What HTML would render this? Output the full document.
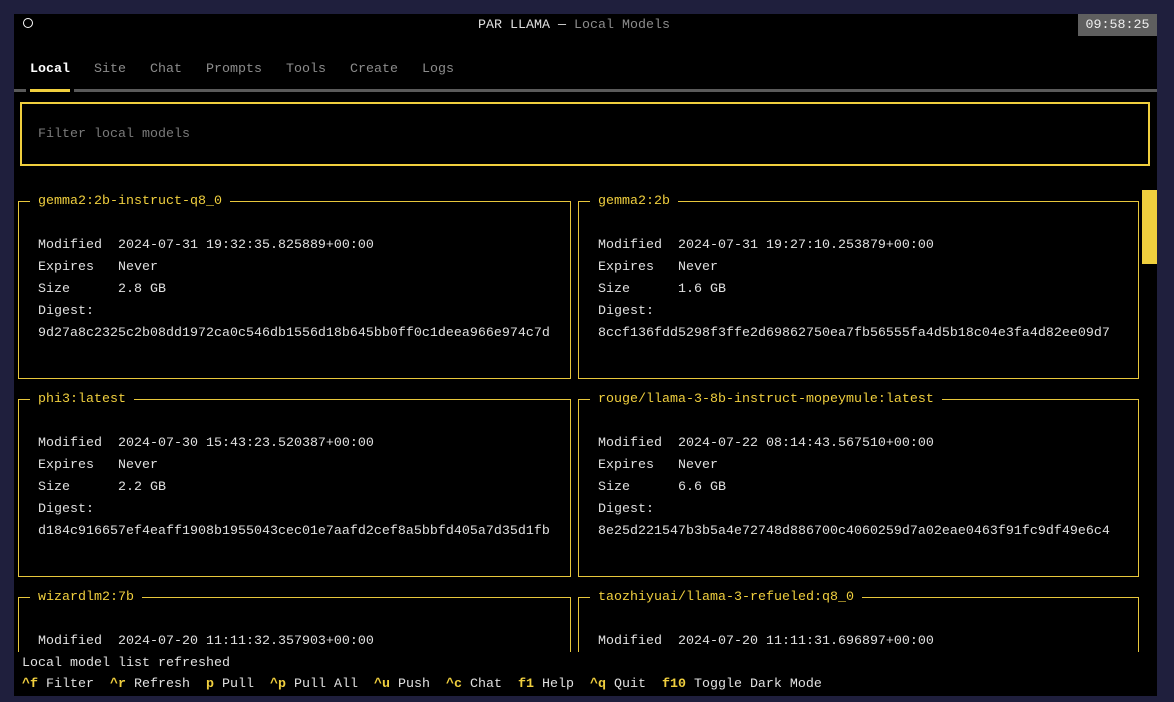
<!DOCTYPE html>
<html style="overflow:hidden;height:702px"><head><meta charset="utf-8"><style>
body{margin:0;width:1174px;height:702px;background:#1f1f3d;overflow:hidden;font-family:"Liberation Mono","DejaVu Sans Mono",monospace;font-size:13.33px;}
#scr{position:absolute;left:14px;top:14px;width:1143px;height:682px;background:#000;overflow:hidden;color:#e0e0e0}
.t{position:absolute;white-space:pre;line-height:22px;transform:translateY(1px)}
.g{color:#8c8c8c}.y{color:#f0cf3e}.b{font-weight:bold}
.card{position:absolute;border:1px solid #e8c73c;width:551px;height:176px}
.ttl{position:absolute;white-space:pre;line-height:22px;background:#000;color:#f0cf3e;transform:translateY(1px)}
#list{position:absolute;left:0;top:176px;width:1143px;height:462px;overflow:hidden}
</style></head><body><div id="scr">
<div style="position:absolute;left:9px;top:4px;width:8px;height:8px;border:1.5px solid #fff;border-radius:50%"></div>
<div class="t" style="left:464px;top:0">PAR LLAMA — <span class="g">Local Models</span></div>
<div class="t" style="left:1064px;top:0;width:79px;height:22px;background:#5f5f5f;text-align:center;color:#eee;transform:none;line-height:23px">09:58:25</div>

<div class="t b" style="left:16px;top:44px;color:#fff">Local</div>
<div class="t g" style="left:80px;top:44px">Site</div>
<div class="t g" style="left:136px;top:44px">Chat</div>
<div class="t g" style="left:192px;top:44px">Prompts</div>
<div class="t g" style="left:272px;top:44px">Tools</div>
<div class="t g" style="left:336px;top:44px">Create</div>
<div class="t g" style="left:408px;top:44px">Logs</div>
<div style="position:absolute;left:0;top:75px;width:12px;height:3px;background:#5a5a5a"></div>
<div style="position:absolute;left:16px;top:75px;width:40px;height:3px;background:#f0cf3e"></div>
<div style="position:absolute;left:60px;top:75px;width:1083px;height:3px;background:#5a5a5a"></div>

<div style="position:absolute;left:6px;top:88px;width:1126px;height:60px;border:2px solid #f0cf3e"></div>
<div class="t" style="left:24px;top:109px;color:#7a7a7a">Filter local models</div>

<div style="position:absolute;left:1128px;top:176px;width:15px;height:74px;background:#f0cf3e"></div>

<div id="list">
<div class="card" style="left:4px;top:11px"></div>
<div class="ttl" style="left:16px;top:0"> gemma2:2b-instruct-q8_0 </div>
<div class="t" style="left:24px;top:44px">Modified  2024-07-31 19:32:35.825889+00:00
Expires   Never
Size      2.8 GB
Digest:
9d27a8c2325c2b08dd1972ca0c546db1556d18b645bb0ff0c1deea966e974c7d</div>
<div class="card" style="left:564px;top:11px;width:559px"></div>
<div class="ttl" style="left:576px;top:0"> gemma2:2b </div>
<div class="t" style="left:584px;top:44px">Modified  2024-07-31 19:27:10.253879+00:00
Expires   Never
Size      1.6 GB
Digest:
8ccf136fdd5298f3ffe2d69862750ea7fb56555fa4d5b18c04e3fa4d82ee09d7</div>
<div class="card" style="left:4px;top:209px"></div>
<div class="ttl" style="left:16px;top:198px"> phi3:latest </div>
<div class="t" style="left:24px;top:242px">Modified  2024-07-30 15:43:23.520387+00:00
Expires   Never
Size      2.2 GB
Digest:
d184c916657ef4eaff1908b1955043cec01e7aafd2cef8a5bbfd405a7d35d1fb</div>
<div class="card" style="left:564px;top:209px;width:559px"></div>
<div class="ttl" style="left:576px;top:198px"> rouge/llama-3-8b-instruct-mopeymule:latest </div>
<div class="t" style="left:584px;top:242px">Modified  2024-07-22 08:14:43.567510+00:00
Expires   Never
Size      6.6 GB
Digest:
8e25d221547b3b5a4e72748d886700c4060259d7a02eae0463f91fc9df49e6c4</div>
<div class="card" style="left:4px;top:407px"></div>
<div class="ttl" style="left:16px;top:396px"> wizardlm2:7b </div>
<div class="t" style="left:24px;top:440px">Modified  2024-07-20 11:11:32.357903+00:00</div>
<div class="card" style="left:564px;top:407px;width:559px"></div>
<div class="ttl" style="left:576px;top:396px"> taozhiyuai/llama-3-refueled:q8_0 </div>
<div class="t" style="left:584px;top:440px">Modified  2024-07-20 11:11:31.696897+00:00</div>
</div>

<div class="t" style="left:8px;top:638px">Local model list refreshed</div>
<div class="t" style="left:8px;top:659px"><span class="y b">^f</span> Filter  <span class="y b">^r</span> Refresh  <span class="y b">p</span> Pull  <span class="y b">^p</span> Pull All  <span class="y b">^u</span> Push  <span class="y b">^c</span> Chat  <span class="y b">f1</span> Help  <span class="y b">^q</span> Quit  <span class="y b">f10</span> Toggle Dark Mode</div>
</div></body></html>
